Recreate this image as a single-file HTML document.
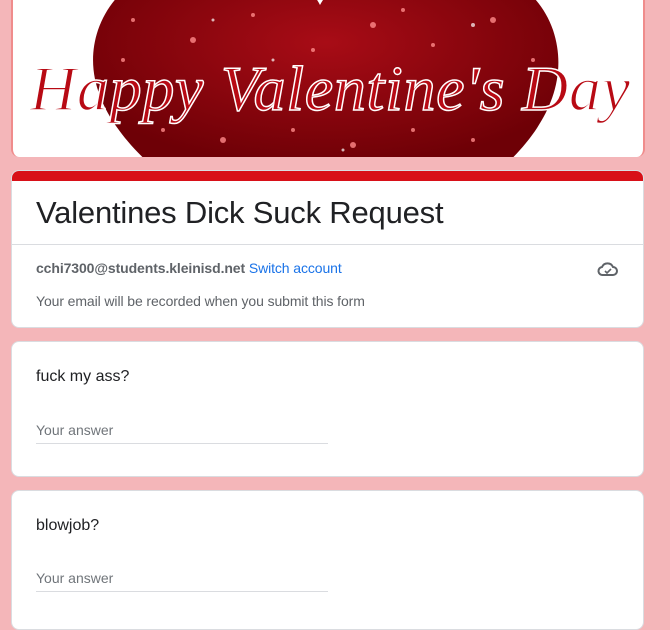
<!DOCTYPE html>
<html><head><meta charset="utf-8"><style>
body{margin:0;background:#f4b6b9;width:670px;height:614px;overflow:hidden;font-family:"Liberation Sans",sans-serif;position:relative}
.card{position:absolute;left:11px;width:633px;background:#fff;border:1px solid #dadce0;border-radius:8px;box-sizing:border-box}
.banner{position:absolute;left:11px;top:-10px;width:634px;height:167px;background:#fff;border-radius:8px;overflow:hidden;border-left:2px solid #f08c8c;border-right:2px solid #f08c8c;box-sizing:border-box}
.q{font-size:16px;color:#202124;position:absolute;left:24px}
.ans{position:absolute;left:24px;width:292px;border-bottom:1px solid #dadce0;font-size:14px;color:#70757a;padding-bottom:5px}
</style></head><body>
<div class="banner">
<svg width="634" height="167" viewBox="0 -10 634 167">
<defs><radialGradient id="g" cx="50%" cy="40%" r="60%"><stop offset="0" stop-color="#a80c16"/><stop offset="1" stop-color="#6e0006"/></radialGradient></defs>
<path d="M307 5 C280 -50 120 -70 85 30 C65 90 110 140 140 167 L490 167 C520 140 560 90 540 30 C505 -70 335 -50 307 5 Z" fill="url(#g)"/>
<g fill="#ff8a8a" opacity="0.8">
<circle cx="120" cy="20" r="2"/><circle cx="180" cy="40" r="3"/><circle cx="240" cy="15" r="2"/><circle cx="300" cy="50" r="2"/><circle cx="360" cy="25" r="3"/><circle cx="420" cy="45" r="2"/><circle cx="480" cy="20" r="3"/><circle cx="520" cy="60" r="2"/><circle cx="150" cy="130" r="2"/><circle cx="210" cy="140" r="3"/><circle cx="280" cy="130" r="2"/><circle cx="340" cy="145" r="3"/><circle cx="400" cy="130" r="2"/><circle cx="460" cy="140" r="2"/><circle cx="110" cy="60" r="2"/><circle cx="390" cy="10" r="2"/>
</g>
<g fill="#fff" opacity="0.7"><circle cx="460" cy="25" r="2"/><circle cx="200" cy="20" r="1.5"/><circle cx="330" cy="150" r="1.5"/><circle cx="260" cy="60" r="1.5"/></g>
<text x="317" y="110" text-anchor="middle" font-family="Liberation Serif,serif" font-style="italic" font-size="64" fill="#b80a14" stroke="#fff" stroke-width="1.5" textLength="600">Happy Valentine's Day</text>
</svg>
</div>
<div class="card" style="top:170px;height:158px;overflow:hidden">
<div style="height:10px;background:#d81018"></div>
<div style="position:absolute;left:24px;top:24px;font-size:31px;letter-spacing:-0.2px;color:#202124">Valentines Dick Suck Request</div>
<div style="position:absolute;left:0;right:0;top:73px;border-top:1px solid #dadce0"></div>
<div style="position:absolute;left:24px;top:89px;font-size:14px;letter-spacing:-0.1px;color:#5f6368"><b>cchi7300@students.kleinisd.net</b> <span style="color:#1a73e8">Switch account</span></div>
<svg style="position:absolute;left:585px;top:90px" width="22" height="16" viewBox="0 0 22 16"><path d="M6 14 H16 A4 4 0 0 0 16 6 A6 6 0 0 0 5 6 A4 4 0 0 0 6 14 Z" fill="none" stroke="#5f6368" stroke-width="2"/><path d="M8 10 L10 12 L14 8" fill="none" stroke="#5f6368" stroke-width="1.6"/></svg>
<div style="position:absolute;left:24px;top:122px;font-size:14px;letter-spacing:-0.1px;color:#5f6368">Your email will be recorded when you submit this form</div>
</div>
<div class="card" style="top:341px;height:136px">
<div class="q" style="top:26px">fuck my ass?</div>
<div class="ans" style="top:80px">Your answer</div>
</div>
<div class="card" style="top:490px;height:140px">
<div class="q" style="top:26px">blowjob?</div>
<div class="ans" style="top:79px">Your answer</div>
</div>
</body></html>
